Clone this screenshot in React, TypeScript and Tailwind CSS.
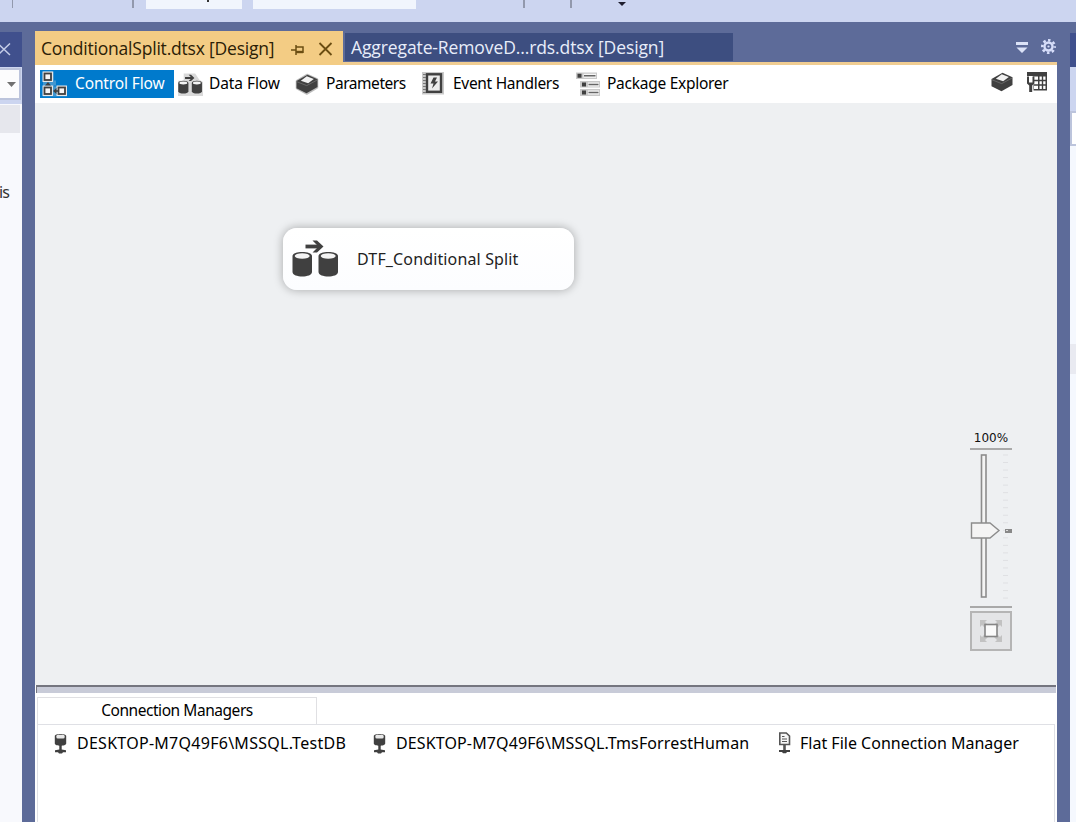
import type { ReactNode } from "react";

const dark = "#404040";

function ControlFlowIcon() {
  return (
    <svg width="26" height="26" viewBox="0 0 26 26" className="shrink-0">
      <path d="M1 .5h11v9h2v5h-2v1h13v10H1z" fill="#dcdcdc" opacity=".3" />
      <g fill="#f7f7f7" stroke="#e8e8e8" strokeWidth="4">
        <rect x="2.500" y="2.500" width="6.500" height="6.500" />
        <rect x="2.500" y="16.500" width="6.500" height="6.500" />
        <rect x="16.500" y="16.500" width="6.500" height="6.500" />
      </g>
      <g fill="#f5f5f5" stroke={dark} strokeWidth="1.800">
        <rect x="2.500" y="2.500" width="6.500" height="6.500" />
        <rect x="2.500" y="16.500" width="6.500" height="6.500" />
        <rect x="16.500" y="16.500" width="6.500" height="6.500" />
      </g>
      <path d="M6 11l3 3.500H3zM11 20l3.500-3v6z" fill={dark} />
      <path d="M13 20h3" stroke={dark} strokeWidth="1.600" />
    </svg>
  );
}

function DataFlowIcon({ size, halo }: { size: number; halo?: boolean }) {
  return (
    <svg width={size} height={size} viewBox="0 0 48 48" className="shrink-0">
      {halo && <path d="M0 17h11V3h22l8 12 7 4v27H0z" fill="#c4c4c4" opacity=".65" />}
      {[0, 26].map((x) => (
        <g key={x} transform={`translate(${x} 1)`}>
          <path d="M.5 20c0-5.500 19.500-5.500 19.500 0v16c0 6-19.500 6-19.500 0z" fill={dark} />
          <ellipse cx="10.200" cy="20" rx="7.500" ry="2.800" fill="#f4f4f4" />
        </g>
      ))}
      <path d="M13.500 11.500h15" stroke={dark} strokeWidth="3.800" fill="none" />
      <path d="M20.500 5.500h4.500l6.500 6-6.500 6h-4.500l6-6z" fill={dark} />
    </svg>
  );
}

function BoxIcon({ halo }: { halo?: boolean }) {
  return (
    <svg width="26" height="24" viewBox="0 0 26 24" className="shrink-0">
      {halo && (
        <path
          d="M13 3l10 4.500v8l-10 6-10-5.500V9z"
          fill="#bcbcbc"
          stroke="#bcbcbc"
          strokeWidth="2.600"
          strokeLinejoin="round"
        />
      )}
      <path d="M13.500 2.800L23.500 7.200v7.800l-11 6.300-10-5V9z" fill={dark} />
      <path d="M12.800 4.300l7 2.700-5.600 4.200-7.400-2.400z" fill="#f1f1f1" />
      <path d="M3 9.800l9.700 3.800 10.500-5.600" stroke="#777" strokeWidth=".7" fill="none" />
    </svg>
  );
}

function EventIcon() {
  return (
    <svg width="23" height="24" viewBox="0 0 23 24" className="shrink-0">
      <rect x="0" y="0" width="22" height="22.500" fill="#c9c9c9" />
      <rect x="5" y="2.300" width="14" height="17.500" fill="#ececec" stroke={dark} strokeWidth="2.400" />
      <path d="M1 2.500h3M1 5.500h3M1 8.500h3M1 11.500h3M1 14.500h3M1 17.500h3M1 20.500h3" stroke="#777" strokeWidth="1.200" />
      <path d="M11.500 5.500h3.500l-2 4h3l-6 7 1.500-5h-3z" fill={dark} />
    </svg>
  );
}

function ExplorerIcon() {
  return (
    <svg width="25" height="25" viewBox="0 0 25 25" className="shrink-0">
      <path d="M0 .5h21v6.500H0zM4 9h20v6.500H4zM4 17h20v7H4z" fill="#c9c9c9" />
      <path d="M7.500 1.800h12.500v4H7.500zM12 10.500h11v4H12zM12 18.500h11v4H12z" fill="#f7f7f7" />
      <path d="M1.500 1.800h4v4h-4zM6 10.500h4v4H6zM6 18.500h4v4H6z" fill={dark} />
      <path d="M8 3.800h11.500M12.500 12.500h10M12.500 20.500h10" stroke="#666" strokeWidth="1.600" />
    </svg>
  );
}

function VariablesIcon() {
  return (
    <svg width="22" height="22" viewBox="0 0 22 22" className="shrink-0">
      <path d="M1 1h20v18.500H7.500V5H1z" fill={dark} />
      <path d="M8 5.500h4v3.200H8zM13.500 5.500h2.300v3.200h-2.300zM17.200 5.500h2.300v3.200h-2.300zM8 10.200h4v3H8zM13.500 10.200h2.300v3h-2.300zM17.200 10.200h2.300v3h-2.300zM8 14.700h4v3.300H8zM13.500 14.700h2.300v3.300h-2.300zM17.200 14.700h2.300v3.300h-2.300z" fill="#fff" />
      <path d="M1 5.500v7l2.200 2V21h3v-6.500l2.200-2v-7H6.500v6H3v-6z" fill={dark} />
    </svg>
  );
}

function ServerIcon() {
  return (
    <svg width="13" height="21" viewBox="0 0 13 21" className="shrink-0">
      <path d="M.8 3C.8.300 12.200.300 12.200 3v7.500c0 3-11.400 3-11.400 0z" fill={dark} />
      <rect x="2.300" y="1.800" width="8.400" height="3.600" rx="1.500" fill="#e8e8e8" />
      <path d="M5.300 12h2.400v4.500l4.300.8v2H9l-1 1.200H5l-1-1.200H1v-2l4.300-.8z" fill={dark} />
    </svg>
  );
}

function FileServerIcon() {
  return (
    <svg width="13" height="22" viewBox="0 0 13 22" className="shrink-0">
      <path d="M1.800 1h6.500l3.200 3v8.500H1.800z" fill="#f6f6f6" stroke="#555" strokeWidth="1.600" />
      <path d="M4 4.500h2.500M4 7h5M4 9.500h5" stroke="#555" strokeWidth="1.200" />
      <path d="M6.500 13v6" stroke="#555" strokeWidth="2.600" />
      <path d="M1 18h11v2H9l-1 1.200H5L4 20H1z" fill={dark} />
    </svg>
  );
}

function Connection({ icon, label, className }: { icon: ReactNode; label: string; className: string }) {
  return (
    <div className={`flex shrink-0 items-center whitespace-nowrap ${className}`}>
      {icon}
      <span>{label}</span>
    </div>
  );
}

function TopToolbar() {
  return (
    <div className="flex h-[22px] shrink-0 items-start bg-[#ccd5f0]">
      <div className="ml-3 h-2 w-px bg-[#9299ad]" />
      <div className="ml-[119px] h-2 w-0.5 bg-[#9299ad]" />
      <div className="ml-3 h-[9px] w-[96px] bg-[#f1f5fd]">
        <div className="ml-[61px] h-0.5 w-0.5 bg-[#333]" />
      </div>
      <div className="ml-[11px] h-[9px] w-[163px] bg-[#f1f5fd]" />
      <div className="ml-[107px] h-2 w-0.5 bg-[#9299ad]" />
      <div className="ml-[45px] h-2 w-0.5 bg-[#9299ad]" />
      <svg width="10" height="7" className="ml-[45px]">
        <path d="M1 2h8L5 6z" fill="#1e1e2e" />
      </svg>
    </div>
  );
}

function LeftPanel() {
  return (
    <div className="mt-[10px] flex w-[22px] shrink-0 flex-col overflow-hidden bg-[#f8f9fd]">
      <div className="flex h-[35px] shrink-0 items-center bg-[#40508d]">
        <svg width="12" height="14">
          <path d="M-2 .5L10 12M10 .5L-2 12" stroke="#c5cde8" strokeWidth="1.500" />
        </svg>
      </div>
      <div className="flex h-[37px] shrink-0 flex-col bg-[#ccd5f0] pt-px">
        <div className="flex h-[32px] w-[21px] items-center border-2 border-l-0 border-[#bcc4dc] bg-[#fcfcfd] pl-[7px]">
          <svg width="9" height="5">
            <path d="M0 0h9L4.500 5z" fill="#717171" />
          </svg>
        </div>
      </div>
      <div className="mt-px h-[28px] w-5 shrink-0 bg-[#e6e7ed]" />
      <div className="mt-[47px] h-6 font-['Noto_Sans',sans-serif] text-[16px] leading-6 text-[#333]">
        <span className="-ml-px tracking-[-0.8px]">is</span>
      </div>
    </div>
  );
}

function RightPanel() {
  return (
    <div className="mt-[11px] flex w-1.5 shrink-0 flex-col bg-[#f5f8fe]">
      <div className="h-[34px] bg-[#40508d]" />
      <div className="h-[44px] bg-[#ccd5f0]" />
      <div className="h-[35px] border-2 border-r-0 border-[#bcc4dc] bg-white" />
      <div className="mt-[198px] h-[30px] bg-[#e9eaf1]" />
    </div>
  );
}

function TabStrip() {
  return (
    <div className="flex h-[34px] shrink-0 items-start border-b-[3px] border-[#f0cd92] font-['Open_Sans',sans-serif] text-[17.500px]">
      <div className="flex h-[34px] w-[308px] shrink-0 items-center bg-[#f3cc84] pl-1.5 text-[#2b2006]">
        <span className="w-[248px] whitespace-nowrap tracking-[-0.2px]">ConditionalSplit.dtsx [Design]</span>
        <svg width="14" height="12" viewBox="0 0 14 12" className="ml-[2px] mt-1">
          <path d="M0 6h4.500M5 1v10M5 3h7v6M5 8.200h7" stroke="#6b4d12" strokeWidth="1.500" fill="none" />
          <path d="M5 8h7" stroke="#6b4d12" strokeWidth="2.400" />
        </svg>
        <svg width="15" height="14" viewBox="0 0 15 14" className="ml-[13px] mt-0.5">
          <path d="M1.500 1l12 12M13.500 1l-12 12" stroke="#6b4d12" strokeWidth="1.800" />
        </svg>
      </div>
      <div className="ml-0.5 mt-0.5 flex h-[28px] w-[388px] shrink-0 items-center bg-[#3d4e80] pl-1.5 text-[#e8edfa]">
        <span className="whitespace-nowrap tracking-[-0.11px]">Aggregate-RemoveD...rds.dtsx [Design]</span>
      </div>
      <div className="ml-auto flex items-center gap-[13px] pr-px pt-2">
        <svg width="13" height="13" viewBox="0 0 13 13" fill="#dbe2f7">
          <path d="M1 2h12v3H1zM1.500 7.500h11L7 13z" />
        </svg>
        <svg width="15" height="15" viewBox="0 0 15 15">
          <circle cx="7.500" cy="7.500" r="6.200" fill="none" stroke="#d7defa" strokeWidth="2.600" strokeDasharray="2.440 2.430" strokeDashoffset="1.200" />
          <circle cx="7.500" cy="7.500" r="4" fill="none" stroke="#d7defa" strokeWidth="2.400" />
          <circle cx="7.500" cy="7.500" r="1.100" fill="#d7defa" />
        </svg>
      </div>
    </div>
  );
}

function DesignerTabs() {
  return (
    <div className="flex h-[38px] shrink-0 items-center bg-white pl-[5px] pr-2 text-[15.500px] whitespace-nowrap text-black">
      <div className="flex h-[28px] w-[134px] shrink-0 items-center bg-[#007acc] pl-0.5 text-white">
        <ControlFlowIcon />
        <span className="ml-[7px] tracking-[-0.13px]">Control Flow</span>
      </div>
      <div className="flex w-[120px] shrink-0 items-center pl-1">
        <DataFlowIcon size={25} halo />
        <span className="ml-[6px] tracking-[-0.08px]">Data Flow</span>
      </div>
      <div className="flex w-[128px] shrink-0 items-center">
        <BoxIcon halo />
        <span className="ml-[6px] tracking-[-0.45px]">Parameters</span>
      </div>
      <div className="flex w-[154px] shrink-0 items-center">
        <EventIcon />
        <span className="ml-[8px] tracking-[-0.3px]">Event Handlers</span>
      </div>
      <div className="flex items-center">
        <ExplorerIcon />
        <span className="ml-[6px] tracking-[-0.27px]">Package Explorer</span>
      </div>
      <div className="mb-1 ml-auto flex items-center gap-[11px] pr-px">
        <BoxIcon />
        <VariablesIcon />
      </div>
    </div>
  );
}

function ZoomControl() {
  return (
    <div className="absolute left-[935px] top-[325px] flex w-[42px] flex-col items-center">
      <div className="h-5 font-['DejaVu_Sans',sans-serif] text-[12px] leading-5 text-[#111]">100%</div>
      <div className="h-0.5 w-full bg-[#a9a9a9]" />
      <svg width="42" height="155" viewBox="0 0 42 155" className="shrink-0">
        <rect x="11.500" y="5" width="4.500" height="142" fill="#f4f4f4" stroke="#8c8c8c" strokeWidth="1.600" />
        {Array.from({ length: 20 }, (_, i) => (
          <path key={i} d={`M33 ${5 + i * 7.53}h5`} stroke="#dfe0e3" strokeWidth="1" />
        ))}
        <path d="M1.500 73h18.500l9 7.500-9 7.500H1.500z" fill="#f4f4f4" stroke="#8c8c8c" strokeWidth="1.400" />
        <path d="M35 79h7v4h-7z" fill="#888" />
        <path d="M36 80.500h2" stroke="#ddd" />
      </svg>
      <div className="mt-[1px] h-0.5 w-full bg-[#a9a9a9]" />
      <div className="mt-[3px] flex h-10 w-full items-center justify-center border-2 border-[#b5b5b5] bg-[#e4e5e7]">
        <svg width="24" height="24" viewBox="0 0 24 24">
          <path d="M1 1h7L6 3l3 3-3 3-3-3-2 2zM23 1v7l-2-2-3 3-3-3 3-3-2-2zM1 23v-7l2 2 3-3 3 3-3 3 2 2zM23 23h-7l2-2-3-3 3-3 3 3 2-2z" fill="#c2c2c2" />
          <rect x="6" y="5.500" width="12" height="12" fill="#fafafa" stroke="#858585" strokeWidth="1.600" />
        </svg>
      </div>
    </div>
  );
}

function Canvas() {
  return (
    <div className="relative h-[582px] shrink-0 bg-[#eef0f2]">
      <div className="absolute left-[248px] top-[125px] flex h-[62px] w-[291px] items-center rounded-[14px] bg-gradient-to-b from-white to-[#fcfdff] pl-[9px] shadow-[0_0_8px_1px_rgba(0,0,0,0.25)]">
        <DataFlowIcon size={48} />
        <span className="ml-[17px] text-[16px] whitespace-nowrap tracking-[0.14px] text-[#222]">DTF_Conditional Split</span>
      </div>
      <ZoomControl />
    </div>
  );
}

function ConnectionManagers() {
  return (
    <div className="flex min-h-0 grow flex-col bg-white text-[16px] text-black">
      <div className="mx-px h-2 shrink-0 border-l border-t-2 border-[#74757f] bg-[#c8cbd8]" />
      <div className="ml-0.5 mt-1 flex h-[27px] w-[280px] shrink-0 items-center justify-center border border-b-0 border-[#e0e0e3]">
        <span className="text-[15.500px] whitespace-nowrap tracking-[-0.45px]">Connection Managers</span>
      </div>
      <div className="ml-0.5 mr-0.5 flex grow items-start border border-b-0 border-[#dfe0e5] pt-[6px]">
        <Connection icon={<ServerIcon />} label="DESKTOP-M7Q49F6\MSSQL.TestDB" className="ml-4 w-[319px] gap-[10px] tracking-[0.27px]" />
        <Connection icon={<ServerIcon />} label="DESKTOP-M7Q49F6\MSSQL.TmsForrestHuman" className="w-[405px] gap-[10px] tracking-[0.12px]" />
        <Connection icon={<FileServerIcon />} label="Flat File Connection Manager" className="gap-[9px] tracking-[0px]" />
      </div>
    </div>
  );
}

export default function App() {
  return (
    <div className="flex h-[822px] w-[1076px] flex-col overflow-hidden bg-[#5d6b99] font-['Noto_Sans',sans-serif]">
      <TopToolbar />
      <div className="flex min-h-0 grow">
        <LeftPanel />
        <div className="ml-[13px] mr-[13px] flex w-[1022px] shrink-0 flex-col pt-[9px]">
          <TabStrip />
          <DesignerTabs />
          <Canvas />
          <ConnectionManagers />
        </div>
        <RightPanel />
      </div>
    </div>
  );
}
